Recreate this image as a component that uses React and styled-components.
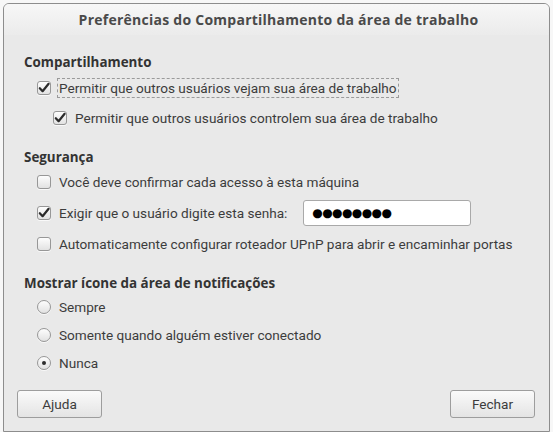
import React from "react";
import styled, { createGlobalStyle } from "styled-components";

const GlobalStyle = createGlobalStyle`
  html, body {
    margin: 0;
    padding: 0;
    background: #f7f7f7;
  }
  body {
    font-family: Roboto, "Noto Sans", "DejaVu Sans", sans-serif;
    font-size: 13.6px;
    color: #3c3c3c;
  }
`;

const Screen = styled.div`
  width: 553px;
  height: 432px;
  padding: 3px 3px 0 3px;
  box-sizing: border-box;
`;

const Window = styled.div`
  height: 429px;
  box-sizing: border-box;
  border: 1px solid #8d8d8d;
  border-radius: 6px 6px 0 0;
  background: #e9e9e9;
  display: flex;
  flex-direction: column;
  overflow: hidden;
`;

const TitleBar = styled.div`
  height: 31px;
  flex: none;
  display: flex;
  align-items: center;
  justify-content: center;
  background: linear-gradient(#f7f7f7, #ebebeb);
  font-family: "Open Sans", sans-serif;
  font-weight: bold;
  font-size: 14px;
  letter-spacing: 0.25px;
  color: #4a4a4a;
  padding-left: 4px;
`;

const Body = styled.div`
  flex: 1;
  display: flex;
  flex-direction: column;
  padding: 17px 14px 13px 13px;
`;

const Section = styled.section`
  display: flex;
  flex-direction: column;
  gap: ${(p) => p.$gap || 0}px;
  margin-bottom: ${(p) => p.$after || 0}px;
`;

const Heading = styled.div`
  font-family: "Open Sans", sans-serif;
  font-weight: bold;
  font-size: 13.4px;
  line-height: 20px;
  height: 20px;
  padding-left: 7px;
  margin-bottom: ${(p) => p.$after || 0}px;
  color: #333;
`;

const Row = styled.div`
  display: flex;
  align-items: center;
  height: 28px;
  padding-left: ${(p) => (p.$nested ? 36 : 20)}px;
`;

const Box = styled.span`
  width: 14px;
  height: 14px;
  flex: none;
  box-sizing: border-box;
  border: 1px solid #979797;
  border-radius: ${(p) => (p.$round ? "50%" : "3px")};
  background: linear-gradient(#fdfdfd, #e2e2e2);
  box-shadow: 0 1px 0 rgba(255, 255, 255, 0.7);
  display: flex;
  align-items: center;
  justify-content: center;
  margin-right: 6px;
`;

const Dot = styled.span`
  width: 4px;
  height: 4px;
  border-radius: 50%;
  background: #2e2e2e;
`;

const Label = styled.span`
  white-space: nowrap;
  line-height: 18px;
  padding: 0 1px;
  border: 1px ${(p) => (p.$focus ? "dashed #9a9a9a" : "solid transparent")};
`;

const Entry = styled.div`
  width: 168px;
  height: 26px;
  box-sizing: border-box;
  margin-left: 14px;
  border: 1px solid #a9a9a9;
  border-radius: 3px;
  background: #fff;
  display: flex;
  align-items: center;
  padding-left: 8px;
  font-family: "DejaVu Sans", sans-serif;
  font-size: 12px;
  letter-spacing: -0.6px;
  color: #000;
`;

const Buttons = styled.div`
  margin-top: auto;
  display: flex;
  justify-content: space-between;
`;

const Button = styled.button`
  width: ${(p) => p.$w}px;
  height: 28px;
  box-sizing: border-box;
  border: 1px solid #9d9d9d;
  border-radius: 3px;
  background: linear-gradient(#fafafa, #e4e4e4);
  font: inherit;
  color: #3c3c3c;
  padding: 0;
`;

const Check = () => (
  <svg width="12" height="12" viewBox="0 0 12 12" style={{ overflow: "visible" }}>
    <path
      d="M1.8 6.2 L4.6 9.2 L10.6 1.8"
      fill="none"
      stroke="#2b2b2b"
      strokeWidth="2.2"
      strokeLinecap="round"
      strokeLinejoin="round"
    />
  </svg>
);

const CheckRow = ({ checked, nested, focus, children }) => (
  <Row $nested={nested}>
    <Box>{checked && <Check />}</Box>
    <Label $focus={focus}>{children}</Label>
  </Row>
);

const RadioRow = ({ checked, children }) => (
  <Row>
    <Box $round>{checked && <Dot />}</Box>
    <Label>{children}</Label>
  </Row>
);

const App = () => (
  <Screen>
    <GlobalStyle />
    <Window>
      <TitleBar>Preferências do Compartilhamento da área de trabalho</TitleBar>
      <Body>
        <Section $gap={2} $after={15}>
          <Heading>Compartilhamento</Heading>
          <CheckRow checked focus>
            Permitir que outros usuários vejam sua área de trabalho
          </CheckRow>
          <CheckRow checked nested>
            Permitir que outros usuários controlem sua área de trabalho
          </CheckRow>
        </Section>
        <Section $gap={3} $after={15}>
          <Heading $after={-2}>Segurança</Heading>
          <CheckRow>Você deve confirmar cada acesso à esta máquina</CheckRow>
          <Row>
            <Box>
              <Check />
            </Box>
            <Label>Exigir que o usuário digite esta senha:</Label>
            <Entry>●●●●●●●●</Entry>
          </Row>
          <CheckRow>
            Automaticamente configurar roteador UPnP para abrir e encaminhar portas
          </CheckRow>
        </Section>
        <Section>
          <Heading>Mostrar ícone da área de notificações</Heading>
          <RadioRow>Sempre</RadioRow>
          <RadioRow>Somente quando alguém estiver conectado</RadioRow>
          <RadioRow checked>Nunca</RadioRow>
        </Section>
        <Buttons>
          <Button $w={85}>Ajuda</Button>
          <Button $w={85}>Fechar</Button>
        </Buttons>
      </Body>
    </Window>
  </Screen>
);

export default App;
